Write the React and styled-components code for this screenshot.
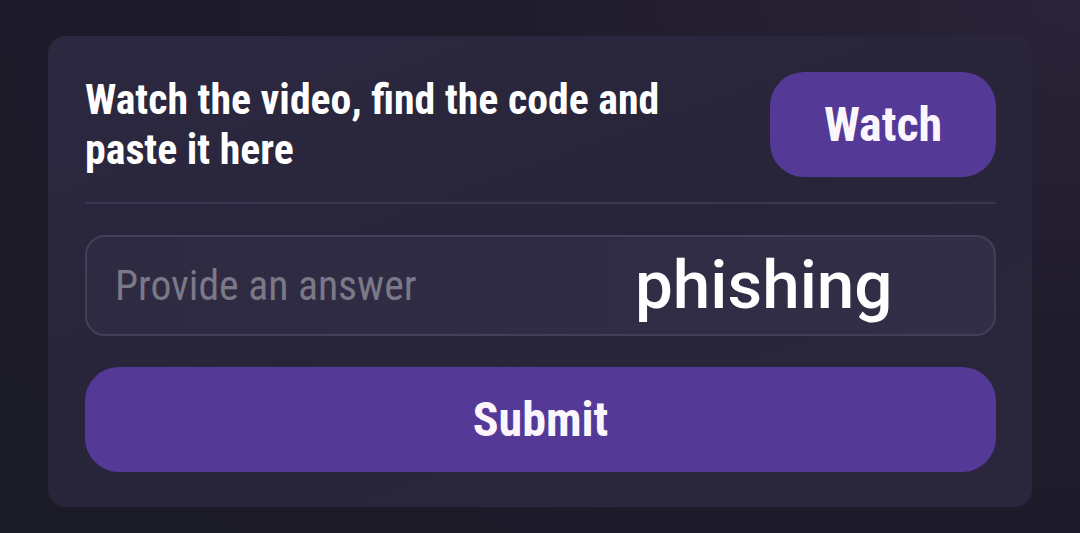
import styled, { createGlobalStyle } from 'styled-components';

const GlobalStyle = createGlobalStyle`
	html, body {
		margin: 0;
		padding: 0;
		height: 100%;
	}
	body {
		background: radial-gradient(120% 140% at 100% 0%, #2b2338 0%, #1f1c2c 45%, #1b1a27 100%);
		font-family: Roboto, "Liberation Sans", sans-serif;
	}
	#root {
		min-height: 100vh;
	}
`;

const Page = styled.div`
	min-height: 100vh;
	box-sizing: border-box;
	padding: 36px 48px 27px;
`;

const Card = styled.div`
	box-sizing: border-box;
	height: 471px;
	padding: 36px 36px 35px 37px;
	border-radius: 18px;
	background: linear-gradient(160deg, #2b2840 0%, #28253a 50%, #2a263d 100%);
	display: flex;
	flex-direction: column;
`;

const Header = styled.div`
	display: flex;
	align-items: center;
	justify-content: space-between;
	gap: 24px;
`;

const Title = styled.h2`
	margin: 0;
	font-family: "Roboto Condensed", Roboto, sans-serif;
	font-stretch: condensed;
	font-weight: 700;
	font-size: 41.8px;
	line-height: 50px;
	color: #ffffff;
	max-width: 600px;
`;

const Button = styled.button`
	box-sizing: border-box;
	border: none;
	background: #553997;
	color: #fbf6fd;
	font-family: "Roboto Condensed", Roboto, sans-serif;
	font-stretch: condensed;
	font-weight: 700;
	font-size: 48px;
	height: 105px;
	border-radius: 34px;
	width: ${(props) => (props.fullWidth ? '100%' : '226px')};
	flex-shrink: 0;
	cursor: pointer;
`;

const Divider = styled.div`
	height: 2px;
	background: #3a3652;
	margin: 25px 0 31px;
`;

const InputBox = styled.label`
	position: relative;
	box-sizing: border-box;
	display: flex;
	align-items: center;
	height: 101px;
	padding: 0 28px;
	border: 2px solid #423f5a;
	border-radius: 20px;
	background: linear-gradient(90deg, #2e2a42 0%, #322e47 100%);
	margin-bottom: 31px;
`;

const Input = styled.input`
	flex: 1;
	border: none;
	outline: none;
	background: transparent;
	font-family: "Roboto Condensed", Roboto, sans-serif;
	font-stretch: condensed;
	font-size: 41.7px;
	color: #ffffff;
	padding: 0;
	&::placeholder {
		color: #7b7888;
	}
`;

const Overlay = styled.span`
	position: absolute;
	left: 548px;
	top: 8px;
	font-family: Roboto, sans-serif;
	font-weight: 500;
	font-size: 67.4px;
	color: #ffffff;
	pointer-events: none;
`;

function App() {
	return (
		<>
			<GlobalStyle />
			<Page>
				<Card>
					<Header>
						<Title>Watch the video, find the code and paste it here</Title>
						<Button>Watch</Button>
					</Header>
					<Divider />
					<InputBox>
						<Input placeholder="Provide an answer" />
						<Overlay>phishing</Overlay>
					</InputBox>
					<Button fullWidth>Submit</Button>
				</Card>
			</Page>
		</>
	);
}

export default App;
